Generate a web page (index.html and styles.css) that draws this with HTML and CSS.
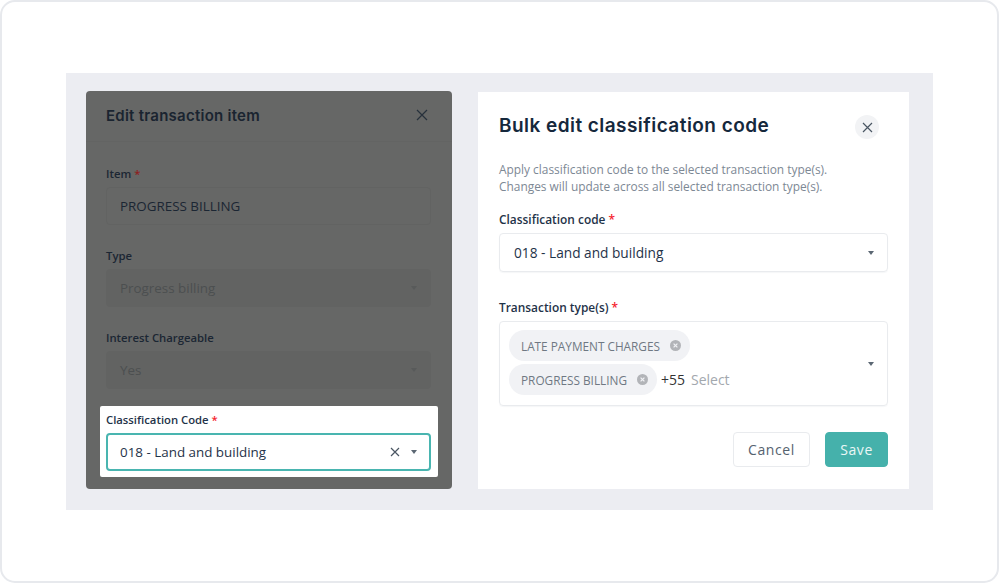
FILE: index.html
```html
<!DOCTYPE html>
<html lang="en">
<head>
<meta charset="utf-8">
<title>Bulk edit classification code</title>
<link rel="stylesheet" href="styles.css">
</head>
<body>
<main class="frame">
  <div class="panel">
    <section class="dialog dialog-dim">
      <header class="dim-head">
        <h2 class="dim-title">Edit transaction item</h2>
        <svg class="x-icon dim-x" width="12" height="12" viewBox="0 0 12 12"><path d="M1 1l10 10M11 1L1 11"/></svg>
      </header>
      <div class="dim-body">
        <div class="field">
          <label class="label">Item <span class="req">*</span></label>
          <div class="input input-dim">PROGRESS BILLING</div>
        </div>
        <div class="field">
          <label class="label">Type</label>
          <div class="input input-dim input-off"><span>Progress billing</span><i class="caret caret-off"></i></div>
        </div>
        <div class="field">
          <label class="label">Interest Chargeable</label>
          <div class="input input-dim input-off"><span>Yes</span><i class="caret caret-off"></i></div>
        </div>
        <div class="field field-hl">
          <label class="label">Classification Code <span class="req">*</span></label>
          <div class="input input-focus">
            <span class="grow">018 - Land and building</span>
            <svg class="x-icon clear-x" width="10" height="10" viewBox="0 0 10 10"><path d="M1 1l8 8M9 1L1 9"/></svg>
            <i class="caret"></i>
          </div>
        </div>
      </div>
    </section>

    <section class="dialog dialog-main">
      <header class="main-head">
        <h2 class="main-title">Bulk edit classification code</h2>
        <button class="round-close" type="button" aria-label="Close">
          <svg class="x-icon" width="11" height="11" viewBox="0 0 11 11"><path d="M1 1l9 9M10 1L1 10"/></svg>
        </button>
      </header>
      <p class="desc">Apply classification code to the selected transaction type(s).<br>Changes will update across all selected transaction type(s).</p>
      <div class="field field-code">
        <label class="label">Classification code <span class="req">*</span></label>
        <div class="input input-line"><span class="grow">018 - Land and building</span><i class="caret"></i></div>
      </div>
      <div class="field field-types">
        <label class="label">Transaction type(s) <span class="req">*</span></label>
        <div class="multi">
          <div class="chips">
            <div class="chip-row">
              <span class="chip">LATE PAYMENT CHARGES
                <svg class="chip-x" width="11" height="11" viewBox="0 0 11 11"><circle cx="5.5" cy="5.5" r="5.5"/><path d="M3.6 3.6l3.8 3.8M7.4 3.6L3.6 7.4"/></svg>
              </span>
            </div>
            <div class="chip-row">
              <span class="chip">PROGRESS BILLING
                <svg class="chip-x" width="11" height="11" viewBox="0 0 11 11"><circle cx="5.5" cy="5.5" r="5.5"/><path d="M3.6 3.6l3.8 3.8M7.4 3.6L3.6 7.4"/></svg>
              </span>
              <span class="more">+55</span>
              <span class="placeholder">Select</span>
            </div>
          </div>
          <i class="caret"></i>
        </div>
      </div>
      <footer class="actions">
        <button class="btn btn-ghost" type="button">Cancel</button>
        <button class="btn btn-save" type="button">Save</button>
      </footer>
    </section>
  </div>
</main>
</body>
</html>
```
FILE: styles.css
```css
* { box-sizing: border-box; }
html, body { margin: 0; height: 100%; }
body {
  width: 999px;
  height: 583px;
  overflow: hidden;
  background: #fff;
  font-family: "Open Sans", "Liberation Sans", sans-serif;
  color: #1f3349;
}
.frame {
  width: 999px;
  height: 583px;
  border: 2px solid #e7e9ed;
  border-radius: 15px;
  background: #fff;
  padding: 71px 64px 71px 64px;
}
.panel {
  width: 867px;
  height: 437px;
  background: #ecedf2;
  display: flex;
  padding: 18px 24px 21px 20px;
  gap: 26px;
}
.dialog { height: 398px; }
.dialog-dim {
  width: 366px;
  background: #666766;
  border-radius: 4px;
  color: #1b2633;
}
.dim-head {
  height: 51px;
  padding: 0 24px 1px 20px;
  display: flex;
  align-items: center;
  justify-content: space-between;
  border-bottom: 1px solid #636463;
}
.dim-title, .main-title {
  margin: 0;
  font-family: Inter, "Liberation Sans", sans-serif;
  font-weight: 600;
}
.dim-title { font-size: 15px; letter-spacing: 0.25px; color: #1a2430; }
.x-icon { display: block; fill: none; stroke: #4a5663; stroke-width: 1.2; }
.dim-x { stroke: #27313c; margin-top: -1px; }
.dim-body {
  padding: 23px 21px 0 20px;
  display: flex;
  flex-direction: column;
  gap: 22px;
}
.field { display: flex; flex-direction: column; gap: 5px; }
.label {
  font-size: 11.9px;
  line-height: 17px;
  font-weight: 600;
  color: #1f3349;
}
.dialog-dim .label { color: #1b2633; font-size: 11.3px; }
.req { color: #f5222d; }
.dim-body .field:not(.field-hl) .req { color: #8e1f22; }
.input {
  height: 38px;
  border-radius: 4px;
  display: flex;
  align-items: center;
  padding: 0 13px 0 13px;
  font-size: 13.7px;
  color: #1f3349;
}
.dialog-dim .input { font-size: 13.4px; }
.input-dim {
  border: 1px solid #626362;
  color: #1b2633;
}
.dialog-dim .input-off {
  background: #626362;
  color: #4c4f50;
  justify-content: space-between;
}
.field-hl {
  background: #fff;
  margin: -5px -7px 0 -6px;
  padding: 5px 7px 6px 6px;
  height: 71px;
  border-radius: 2px;
}
.dialog-dim .field-hl .label { color: #1f3349; }
.input-focus {
  border: 2px solid #49b5b0;
  padding: 0 12px;
}
.grow { flex: 1; }
.clear-x { margin-right: 11px; }
.caret {
  width: 0;
  height: 0;
  border: 3.5px solid transparent;
  border-top: 4px solid #5b6773;
  border-bottom: 0;
  display: block;
}
.caret-off { border-top-color: #585a5a; }
.dialog-main {
  width: 431px;
  margin-top: 1px;
  height: 397px;
  background: #fff;
  padding: 0 21px;
}
.main-head {
  display: flex;
  justify-content: space-between;
  align-items: flex-start;
  padding-top: 22px;
}
.main-title { font-size: 19px; letter-spacing: 0.45px; line-height: 24px; color: #15283c; }
.round-close {
  width: 24px;
  height: 24px;
  margin: 1px 9px 0 0;
  padding: 0;
  border: 0;
  border-radius: 50%;
  background: #f2f3f5;
  display: flex;
  align-items: center;
  justify-content: center;
}
.desc {
  margin: 22px 0 0;
  font-size: 11.9px;
  line-height: 17px;
  color: #7d8894;
}
.field-code { margin-top: 16px; }
.input-line, .multi {
  border: 1px solid #e9ebee;
  border-radius: 4px;
  box-shadow: 0 1px 1px rgba(30, 50, 70, 0.04);
}
.dialog-main .input-line { height: 39px; padding: 0 13px 0 14px; }
.field-types { margin-top: 27px; }
.multi {
  height: 85px;
  display: flex;
  align-items: center;
  justify-content: space-between;
  padding: 0 13px 0 9px;
}
.chips { display: flex; flex-direction: column; gap: 3px; margin-bottom: 2px; }
.chip-row { display: flex; align-items: center; }
.chip {
  height: 31px;
  border-radius: 16px;
  background: #f1f2f5;
  color: #6f7883;
  font-size: 11.8px;
  display: inline-flex;
  align-items: center;
  gap: 10px;
  padding: 0 9px 0 12px;
}
.chip-x { display: block; }
.chip-x circle { fill: #b2b4b8; }
.chip-x path { stroke: #f1f2f5; stroke-width: 1.2; fill: none; }
.more { margin-left: 4px; font-size: 14px; color: #333; }
.placeholder { margin-left: 6px; font-size: 14px; color: #a3a8ae; }
.actions {
  margin-top: 26px;
  display: flex;
  justify-content: flex-end;
  gap: 15px;
}
.btn {
  height: 35px;
  border-radius: 4px;
  font-family: "Open Sans", "Liberation Sans", sans-serif;
  font-size: 14px;
  font-weight: 500;
  letter-spacing: 0.6px;
  padding: 0;
}
.btn-ghost {
  width: 77px;
  background: #fff;
  border: 1px solid #e9ebee;
  color: #55626f;
}
.btn-save {
  width: 63px;
  background: #45b1ab;
  border: 1px solid #45b1ab;
  color: #eaf7f6;
}
```
